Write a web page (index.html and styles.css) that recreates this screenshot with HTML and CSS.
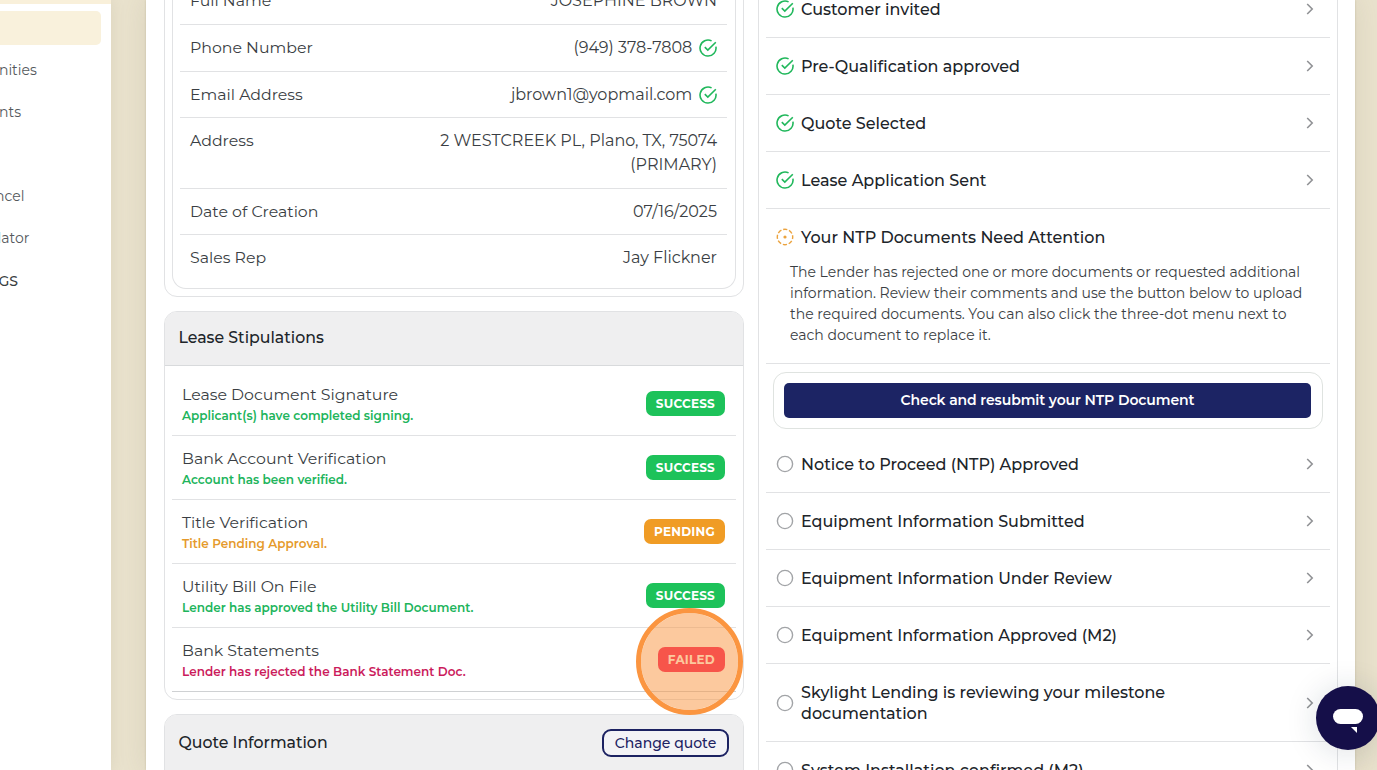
FILE: index.html
```html
<!DOCTYPE html>
<html lang="en">
<head>
<meta charset="utf-8">
<title>Lease details</title>
<link rel="stylesheet" href="styles.css">
</head>
<body>
<svg class="defs" width="0" height="0">
  <symbol id="check" viewBox="0 0 18 18" fill="none" stroke="currentColor" stroke-width="1.6">
    <path d="M12.6 1.9A8 8 0 1 0 16.9 7.6"/><path d="M5.8 8.2l3 2.9L16.8 3.2"/>
  </symbol>
  <symbol id="alert" viewBox="0 0 18 18" fill="none" stroke="currentColor" stroke-width="1.4">
    <circle cx="9" cy="9" r="7.7" stroke-dasharray="4.2 1.848" stroke-dashoffset="2.1"/><circle cx="9" cy="9" r="1.6" fill="currentColor" stroke="none"/>
  </symbol>
  <symbol id="ring" viewBox="0 0 18 18" fill="none" stroke="currentColor" stroke-width="1.4">
    <circle cx="9" cy="9" r="7.6"/>
  </symbol>
  <symbol id="chev" viewBox="0 0 8 12" fill="none" stroke="currentColor" stroke-width="1.6">
    <path d="M1.2 1l5 5-5 5"/>
  </symbol>
</svg>
<div class="app">
  <nav class="sidebar">
    <div class="nav-top"></div>
    <div class="nav-item active"></div>
    <div class="nav-item">nities</div>
    <div class="nav-item">nts</div>
    <div class="nav-item"></div>
    <div class="nav-item cut">ncel</div>
    <div class="nav-item lat">lator</div>
    <div class="nav-item group">GS</div>
  </nav>
  <main class="panel">
    <div class="left">
      <section class="card info">
        <div class="info-inner">
          <div class="irow"><span class="lbl">Full Name</span><span class="val">JOSEPHINE BROWN</span></div>
          <div class="irow"><span class="lbl">Phone Number</span><span class="val">(949) 378-7808 <svg class="ok"><use href="#check"/></svg></span></div>
          <div class="irow"><span class="lbl">Email Address</span><span class="val">jbrown1@yopmail.com <svg class="ok"><use href="#check"/></svg></span></div>
          <div class="irow"><span class="lbl">Address</span><span class="val">2 WESTCREEK PL, Plano, TX, 75074<br>(PRIMARY)</span></div>
          <div class="irow"><span class="lbl">Date of Creation</span><span class="val">07/16/2025</span></div>
          <div class="irow"><span class="lbl">Sales Rep</span><span class="val">Jay Flickner</span></div>
        </div>
      </section>
      <section class="card stip-card">
        <header class="card-head">Lease Stipulations</header>
        <div class="stips">
          <div class="srow"><div><div class="title">Lease Document Signature</div><div class="note green">Applicant(s) have completed signing.</div></div><span class="badge success">SUCCESS</span></div>
          <div class="srow"><div><div class="title">Bank Account Verification</div><div class="note green">Account has been verified.</div></div><span class="badge success">SUCCESS</span></div>
          <div class="srow"><div><div class="title">Title Verification</div><div class="note orange">Title Pending Approval.</div></div><span class="badge pending">PENDING</span></div>
          <div class="srow"><div><div class="title">Utility Bill On File</div><div class="note green">Lender has approved the Utility Bill Document.</div></div><span class="badge success">SUCCESS</span></div>
          <div class="srow"><div><div class="title">Bank Statements</div><div class="note red">Lender has rejected the Bank Statement Doc.</div></div><span class="badge failed">FAILED<i class="click-ring"></i></span></div>
        </div>
      </section>
      <section class="card quote">
        <header class="card-head">Quote Information<button class="outline">Change quote</button></header>
      </section>
    </div>
    <section class="right">
      <div class="step"><svg class="ic ok"><use href="#check"/></svg><span>Customer invited</span><svg class="chev"><use href="#chev"/></svg></div>
      <div class="step"><svg class="ic ok"><use href="#check"/></svg><span>Pre-Qualification approved</span><svg class="chev"><use href="#chev"/></svg></div>
      <div class="step"><svg class="ic ok"><use href="#check"/></svg><span>Quote Selected</span><svg class="chev"><use href="#chev"/></svg></div>
      <div class="step"><svg class="ic ok"><use href="#check"/></svg><span>Lease Application Sent</span><svg class="chev"><use href="#chev"/></svg></div>
      <div class="current">
        <div class="step"><svg class="ic warn"><use href="#alert"/></svg><span>Your NTP Documents Need Attention</span></div>
        <p>The Lender has rejected one or more documents or requested additional information. Review their comments and use the button below to upload the required documents. You can also click the three-dot menu next to each document to replace it.</p>
      </div>
      <div class="action"><button class="primary">Check and resubmit your NTP Document</button></div>
      <div class="step"><svg class="ic"><use href="#ring"/></svg><span>Notice to Proceed (NTP) Approved</span><svg class="chev"><use href="#chev"/></svg></div>
      <div class="step"><svg class="ic"><use href="#ring"/></svg><span>Equipment Information Submitted</span><svg class="chev"><use href="#chev"/></svg></div>
      <div class="step"><svg class="ic"><use href="#ring"/></svg><span>Equipment Information Under Review</span><svg class="chev"><use href="#chev"/></svg></div>
      <div class="step"><svg class="ic"><use href="#ring"/></svg><span>Equipment Information Approved (M2)</span><svg class="chev"><use href="#chev"/></svg></div>
      <div class="step tall"><svg class="ic"><use href="#ring"/></svg><span>Skylight Lending is reviewing your milestone<br>documentation</span><svg class="chev"><use href="#chev"/></svg></div>
      <div class="step"><svg class="ic"><use href="#ring"/></svg><span>System Installation confirmed (M2)</span><svg class="chev"><use href="#chev"/></svg></div>
    </section>
  </main>
</div>
<div class="chat"><svg width="64" height="64" viewBox="0 0 64 64" fill="#fff"><rect x="17" y="23" width="30" height="15" rx="7.5"/><path d="M35 41h6v6z"/></svg></div>
</body>
</html>
```
FILE: styles.css
```css
* { box-sizing: border-box; }
body { margin: 0; width: 1377px; height: 770px; overflow: hidden; font-family: Montserrat, Inter, sans-serif; font-size: 16px; color: #3a3e43; background: #e9e2cd; }
button { font: inherit; }
.defs { position: absolute; }
.app { display: flex; height: 770px; overflow: hidden; }

.sidebar { width: 111px; background: #fff; font-size: 14px; color: #54585c; flex: none; box-shadow: 0 0 14px rgba(120, 105, 75, .12); }
.nav-top { height: 4px; background: #f9f0da; margin-bottom: 7px; }
.nav-item { height: 34px; margin: 0 10px 8px 0; line-height: 34px; text-indent: -1px; }
.nav-item.active { background: #f9f1dc; border-radius: 0 5px 5px 0; }
.nav-item.cut { text-indent: -5px; }
.nav-item.lat { text-indent: -2.5px; }
.nav-item.group { color: #393d41; font-weight: 500; line-height: 36px; text-indent: -1.5px; }

.panel { margin-left: 35px; width: 1209px; flex: none; background: #fff; box-shadow: 0 0 26px rgba(120, 105, 75, .14), 0 0 2px rgba(100, 90, 60, .25); padding-left: 18px; display: flex; align-items: flex-start; gap: 14px; height: 770px; }

.left { width: 580px; flex: none; margin-top: -40px; }
.card { border: 1px solid #e1e2e4; border-radius: 13px; overflow: hidden; background: #fff; }
.info { padding: 0 7px 7px; height: 337px; margin-bottom: 14px; }
.info-inner { border: 1px solid #e1e2e4; border-top: 0; border-radius: 0 0 14px 14px; padding: 17.4px 8px 0 7px; height: 328px; }
.irow { display: flex; justify-content: space-between; padding: 11px 10px 10.6px; line-height: 24px; border-bottom: 1px solid #e1e2e4; }
.irow:last-child { border-bottom: 0; }
.lbl, .title { font-size: 15.75px; }
.val { text-align: right; }
.val .ok { width: 18px; height: 18px; margin-left: 2.5px; vertical-align: -4px; }
.ok { color: #21b85c; }

.card-head { height: 54px; background: #efeff0; border-bottom: 1px solid #d8dadc; display: flex; align-items: center; justify-content: space-between; padding: 0 14px 2px 13.5px; font-size: 15.75px; font-weight: 500; color: #202429; }
.stip-card { overflow: visible; margin-bottom: 14px; }
.stip-card .card-head { border-radius: 12px 12px 0 0; }
.stips { padding: 6px 7px 7px; }
.srow { height: 64px; border-bottom: 1px solid #e1e2e4; display: flex; justify-content: space-between; align-items: center; padding: 1px 11px 0 10px; }
.srow:last-child { border-color: #cfd1d3; }
.title { line-height: 24px; }
.note { font-size: 12px; line-height: 18px; font-weight: 600; letter-spacing: .03px; }
.green { color: #20b45b; }
.orange { color: #e59a2c; }
.red { color: #cb1b5c; }
.badge { position: relative; height: 25px; line-height: 25px; margin-bottom: 1px; padding: 0 10px; border-radius: 7px; font-size: 12px; font-weight: 700; letter-spacing: .25px; color: #fff; }
.success { background: #1dc25a; }
.pending { background: #f09c25; }
.failed { background: #f51756; }
.click-ring { position: absolute; left: -22px; top: -39px; width: 107px; height: 107px; border-radius: 50%; background: rgba(250, 148, 62, .5); border: 5px solid #fb9540; background-clip: padding-box; z-index: 3; }
.quote { height: 100px; }
.quote .card-head { height: 57px; border: 0; padding-bottom: 1.5px; line-height: 18px; }
.outline { width: 127px; height: 28px; margin-top: 1px; border: 2px solid #1c2262; border-radius: 9px; background: #f3f3f6; color: #1c2262; font-size: 14px; font-weight: 500; padding: 0; line-height: 22px; }

.right { width: 580px; flex: none; border: solid #e1e2e4; border-width: 0 1px; height: 770px; padding: 0 7px; overflow: hidden; font-weight: 500; color: #202429; }
.right > .step:first-child { margin-top: -19px; }
.step { height: 57px; border-bottom: 1px solid #e1e2e4; display: flex; align-items: center; padding: 0 16px 0 10px; line-height: 21px; }
.step span { flex: 1; margin-left: 7px; }
.step.tall { height: 78px; }
.ic { width: 18px; height: 18px; color: #a2a4a7; flex: none; }
.ic.ok { color: #21b85c; }
.ic.warn { color: #eba33f; margin-bottom: 1px; }
.chev { width: 8px; height: 12px; color: #909295; flex: none; }
.current { height: 155px; border-bottom: 1px solid #e1e2e4; }
.current .step { border: 0; }
.current p { margin: -4px 10px 0 24px; font-size: 14px; line-height: 21px; font-weight: 400; color: #3a3e43; }
.action { margin: 8px 7px 7px; height: 57px; border: 1px solid #dfe3e0; border-radius: 13px; padding: 10px 11px 0 10px; }
.primary { display: block; width: 100%; height: 35px; border: 0; border-radius: 5px; background: #1c2464; color: #fff; font-size: 14px; font-weight: 600; letter-spacing: -.1px; padding: 0 0 2px; }

.chat { position: absolute; left: 1316px; top: 686px; width: 64px; height: 64px; border-radius: 50%; background: #150f49; box-shadow: 0 2px 32px rgba(20, 40, 60, .15); }
```
